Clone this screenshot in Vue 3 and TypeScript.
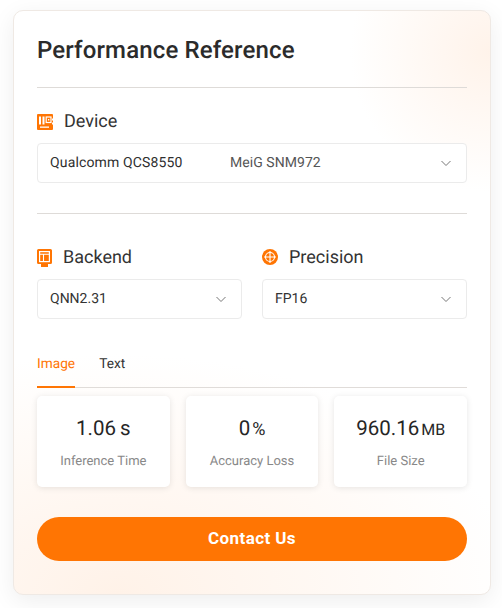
<script setup lang="ts">
const metrics = [
  { value: '1.06', unit: 's', unitClass: 'big', label: 'Inference Time' },
  { value: '0', unit: '%', unitClass: 'pct', label: 'Accuracy Loss' },
  { value: '960.16', unit: 'MB', unitClass: '', label: 'File Size' },
]
</script>

<template>
  <div class="page">
    <main class="card">
      <h1 class="title">Performance Reference</h1>
      <div class="rule title-rule"></div>

      <section class="device">
        <div class="label device-label">
          <svg class="icon" viewBox="0 0 16 16" width="16" height="16">
            <path d="M1 0h14a1 1 0 0 1 1 1v3.500h-1v2h1v2h-1v2h1V15a1 1 0 0 1-1 1H1a1 1 0 0 1-1-1V1a1 1 0 0 1 1-1z" fill="#ff7503" />
            <g fill="#fff">
              <rect x="2" y="2.500" width="2" height="8" />
              <rect x="5.500" y="2.500" width="2" height="8" />
              <rect x="3" y="12.500" width="9" height="1.300" />
            </g>
            <rect x="9.200" y="3" width="4.800" height="5.500" fill="none" stroke="#fff" stroke-width="1.200" />
            <rect x="11" y="5" width="1.300" height="1.500" fill="#fff" />
          </svg>
          <span>Device</span>
        </div>
        <div class="select">
          <span class="chip-name">Qualcomm QCS8550</span>
          <span class="chip-board">MeiG SNM972</span>
          <svg class="chev" viewBox="0 0 12 12" width="12" height="12"><path d="M1.500 4l4.500 4.500L10.500 4" fill="none" stroke="#777" stroke-width="1" /></svg>
        </div>
      </section>

      <div class="rule section-rule"></div>

      <section class="pair">
        <div class="field">
          <div class="label">
            <svg class="icon" viewBox="0 0 16 18" width="16" height="18">
              <path d="M1.500 0h12A1.500 1.500 0 0 1 15 1.500v12a1.500 1.500 0 0 1-1.500 1.500H11v3H4v-3H1.500A1.500 1.500 0 0 1 0 13.500v-12A1.500 1.500 0 0 1 1.500 0z" fill="#ff7503" />
              <rect x="2.600" y="2.600" width="9.800" height="10" fill="none" stroke="#fff" stroke-width="1.200" />
              <path d="M2.600 5.300h9.800M6.500 5.300v7.300" fill="none" stroke="#fff" stroke-width="1.100" />
            </svg>
            <span>Backend</span>
          </div>
          <div class="select">
            <span class="plain">QNN2.31</span>
            <svg class="chev" viewBox="0 0 12 12" width="12" height="12"><path d="M1.500 4l4.500 4.500L10.500 4" fill="none" stroke="#777" stroke-width="1" /></svg>
          </div>
        </div>
        <div class="field">
          <div class="label">
            <svg class="icon precision" viewBox="0 0 17 17" width="17" height="17">
              <circle cx="8" cy="8" r="8" fill="#ff7503" />
              <circle cx="8" cy="8" r="4.500" fill="none" stroke="#fff" stroke-width="1.100" />
              <path d="M8 2v12M2 8h12" fill="none" stroke="#fff" stroke-width="1.100" />
            </svg>
            <span>Precision</span>
          </div>
          <div class="select">
            <span class="plain">FP16</span>
            <svg class="chev" viewBox="0 0 12 12" width="12" height="12"><path d="M1.500 4l4.500 4.500L10.500 4" fill="none" stroke="#777" stroke-width="1" /></svg>
          </div>
        </div>
      </section>

      <nav class="tabs">
        <span class="tab active">Image</span>
        <span class="tab">Text</span>
      </nav>

      <section class="metrics">
        <div v-for="m in metrics" :key="m.label" class="metric">
          <div class="value">{{ m.value }}<span class="unit" :class="m.unitClass">{{ m.unit }}</span></div>
          <div class="metric-label">{{ m.label }}</div>
        </div>
      </section>

      <button class="cta" type="button">Contact Us</button>
    </main>
  </div>
</template>

<style>
html, body { margin: 0; background: #fff; }
</style>

<style scoped>
.page {
  width: 502px;
  height: 608px;
  box-sizing: border-box;
  padding: 10px 11px 0 13px;
  font-family: Roboto, "Liberation Sans", sans-serif;
  color: #2b2b2b;
  overflow: hidden;
  text-rendering: geometricPrecision;
}
.card {
  box-sizing: border-box;
  height: 585px;
  padding: 0 23px;
  border: 1px solid #efe9e4;
  border-radius: 10px;
  box-shadow: 0 6px 24px rgba(0, 0, 0, 0.07);
  background:
    radial-gradient(circle at 100% 7%, #fff3ea 0, rgba(255, 243, 234, 0) 140px),
    radial-gradient(ellipse 400px 240px at 22% 100%, #fff2e8 0, rgba(255, 242, 232, 0) 100%),
    #fff;
  display: flex;
  flex-direction: column;
}
.title {
  margin: 0;
  padding-top: 23px;
  font-size: 24px;
  line-height: 32px;
  font-weight: 500;
  letter-spacing: 0.14px;
  color: #2b2b2b;
}
.rule {
  height: 1px;
  background: #dedbd8;
}
.title-rule { margin-top: 21px; }
.device { margin-top: 22px; }
.label {
  display: flex;
  align-items: center;
  gap: 10px;
  font-size: 18px;
  line-height: 24px;
  color: #333;
}
.device-label { gap: 11px; }
.icon { flex: none; }
.precision {
  margin-bottom: 1px;
}
.select {
  box-sizing: border-box;
  height: 40px;
  margin-top: 9px;
  padding: 0 14px 0 12px;
  display: flex;
  align-items: center;
  background: #fff;
  border: 1px solid #ebebeb;
  border-radius: 4px;
  font-size: 14px;
}
.chip-name { width: 180px; color: #2f2f2f; letter-spacing: 0.15px; }
.chip-board { color: #555; letter-spacing: 0.05px; }
.plain { color: #333; }
.chev { margin-left: auto; }
.section-rule { margin-top: 30px; }
.pair {
  margin-top: 32px;
  display: grid;
  grid-template-columns: 1fr 1fr;
  gap: 20px;
}
.tabs {
  margin-top: 24px;
  display: flex;
  gap: 24px;
  height: 45px;
  box-sizing: border-box;
  border-bottom: 1px solid #e0dcd9;
}
.tab {
  box-sizing: border-box;
  height: 45px;
  padding-top: 11px;
  font-size: 13.7px;
  line-height: 20px;
  color: #333;
}
.tab.active {
  color: #ff7503;
  border-bottom: 2px solid #ff7503;
}
.metrics {
  margin-top: 8px;
  display: grid;
  grid-template-columns: repeat(3, 1fr);
  gap: 16px;
}
.metric {
  height: 91px;
  box-sizing: border-box;
  padding-top: 19px;
  background: #fff;
  border-radius: 5px;
  box-shadow: 0 1px 6px rgba(0, 0, 0, 0.1);
  text-align: center;
}
.value {
  height: 28px;
  font-size: 20.5px;
  line-height: 28px;
  color: #262626;
}
.unit {
  font-size: 16px;
  line-height: 1;
  margin-left: 2px;
}
.unit.big {
  font-size: 20.5px;
  margin-left: 4px;
}
.unit.pct {
  font-size: 18px;
  margin-left: 2px;
}
.metric-label {
  margin-top: 10px;
  font-size: 13px;
  line-height: 18px;
  color: #888;
}
.cta {
  margin-top: 30px;
  height: 44px;
  padding: 0 0 2px;
  border: 0;
  border-radius: 22px;
  background: #ff7503;
  color: #fff;
  font-family: inherit;
  font-size: 17px;
  font-weight: 700;
  letter-spacing: 0.4px;
}
</style>
